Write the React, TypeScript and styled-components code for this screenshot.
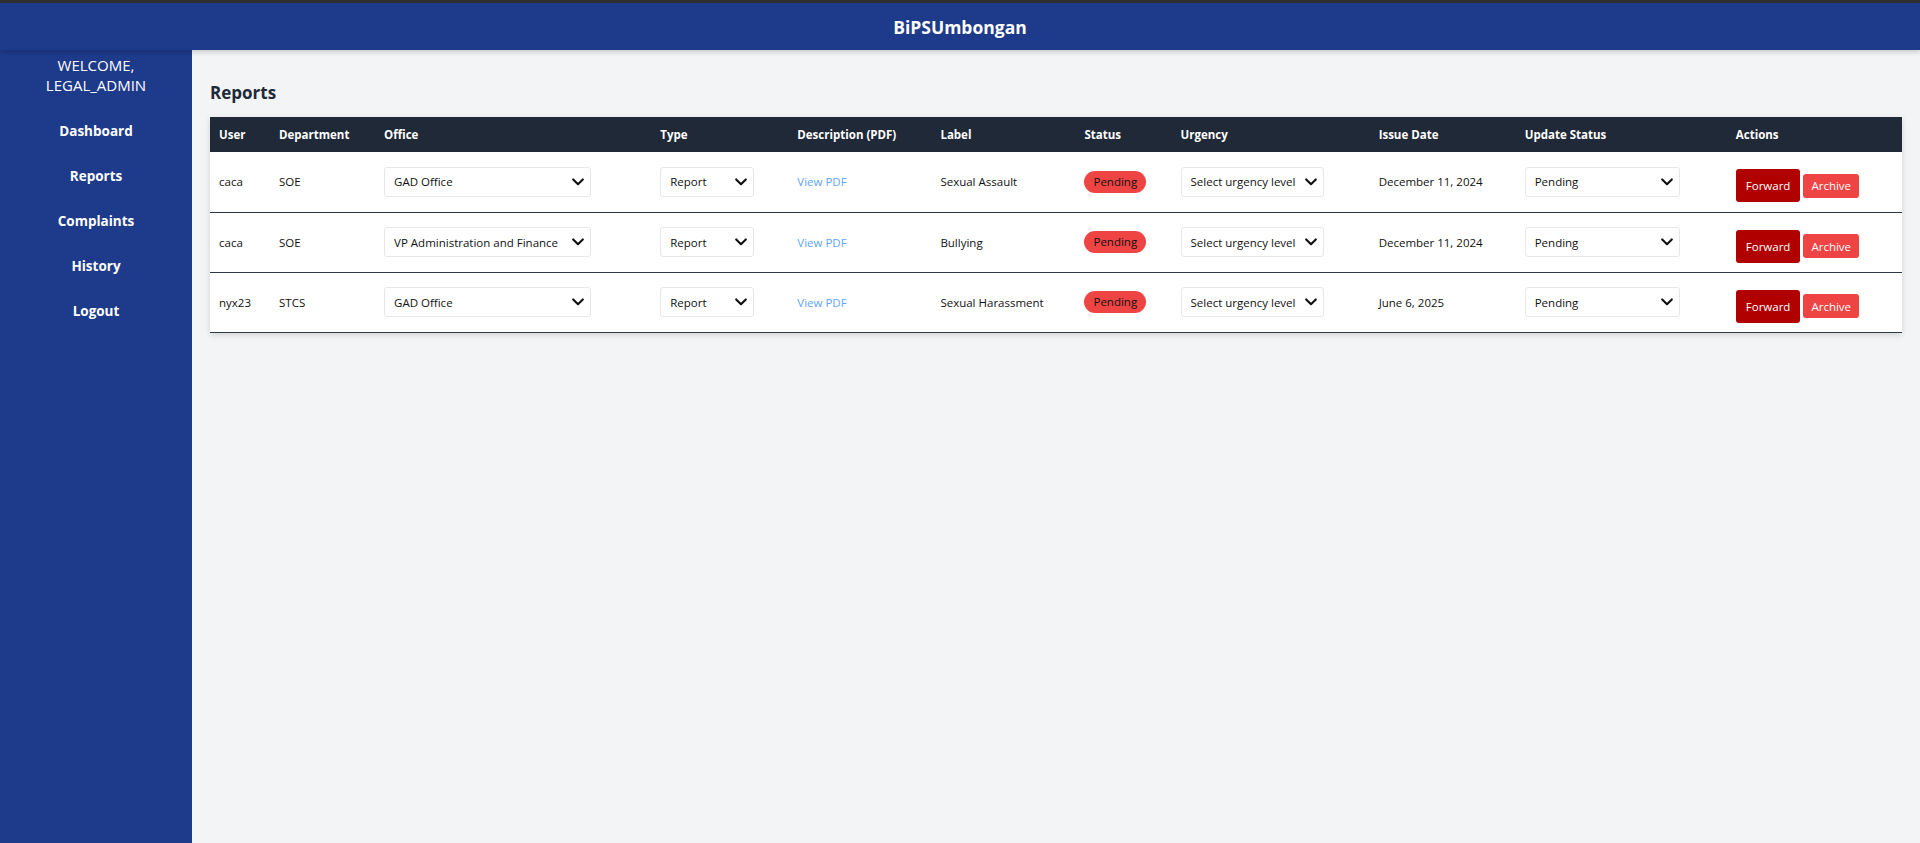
import * as React from 'react';
import styled, { createGlobalStyle } from 'styled-components';

const GlobalStyle = createGlobalStyle`
  html, body {
    margin: 0;
    padding: 0;
  }
  body {
    font-family: 'Open Sans', 'Noto Sans', Arial, sans-serif;
    background: #f3f4f6;
    color: #111827;
  }
  * {
    box-sizing: border-box;
  }
`;

const offices = [
  'GAD Office',
  'VP Administration and Finance',
  'Legal Office',
  'Guidance Office',
];
const urgencyLevels = ['Select urgency level', 'Low', 'Medium', 'High'];
const statusOptions = ['Pending', 'In Progress', 'Resolved'];

const reports = [
  {
    user: 'caca',
    department: 'SOE',
    office: 'GAD Office',
    label: 'Sexual Assault',
    issued: 'December 11, 2024',
  },
  {
    user: 'caca',
    department: 'SOE',
    office: 'VP Administration and Finance',
    label: 'Bullying',
    issued: 'December 11, 2024',
  },
  {
    user: 'nyx23',
    department: 'STCS',
    office: 'GAD Office',
    label: 'Sexual Harassment',
    issued: 'June 6, 2025',
  },
];

const columns = [
  { title: 'User', width: 60 },
  { title: 'Department', width: 105 },
  { title: 'Office', width: 276 },
  { title: 'Type', width: 137 },
  { title: 'Description (PDF)', width: 143 },
  { title: 'Label', width: 144 },
  { title: 'Status', width: 96 },
  { title: 'Urgency', width: 198 },
  { title: 'Issue Date', width: 146 },
  { title: 'Update Status', width: 211 },
  { title: 'Actions', width: 175 },
];

function Chevron() {
  return (
    <svg width="12" height="8" viewBox="0 0 12 8" fill="none">
      <path
        d="M1.2 1.4 L6 6.2 L10.8 1.4"
        stroke="#111"
        strokeWidth="2.1"
        strokeLinecap="round"
        strokeLinejoin="round"
      />
    </svg>
  );
}

function Dropdown({
  width,
  options,
  value,
}: {
  width: number;
  options: string[];
  value: string;
}) {
  return (
    <SelectWrap $width={width}>
      <Select defaultValue={value}>
        {options.map((o) => (
          <option key={o} value={o}>
            {o}
          </option>
        ))}
      </Select>
      <Arrow>
        <Chevron />
      </Arrow>
    </SelectWrap>
  );
}

export default function App() {
  return (
    <Page>
      <GlobalStyle />
      <TopBar>BiPSUmbongan</TopBar>
      <Body>
        <Sidebar>
          <Welcome>
            WELCOME,
            <br />
            LEGAL_ADMIN
          </Welcome>
          <Nav>
            <NavLink>Dashboard</NavLink>
            <NavLink>Reports</NavLink>
            <NavLink>Complaints</NavLink>
            <NavLink>History</NavLink>
            <NavLink>Logout</NavLink>
          </Nav>
        </Sidebar>
        <Main>
          <Title>Reports</Title>
          <Table>
            <colgroup>
              {columns.map((c) => (
                <col key={c.title} style={{ width: c.width }} />
              ))}
            </colgroup>
            <thead>
              <tr>
                {columns.map((c) => (
                  <Th key={c.title}>{c.title}</Th>
                ))}
              </tr>
            </thead>
            <tbody>
              {reports.map((r, i) => (
                <Row key={i}>
                  <Td>{r.user}</Td>
                  <Td>{r.department}</Td>
                  <Td>
                    <Dropdown width={207} options={offices} value={r.office} />
                  </Td>
                  <Td>
                    <Dropdown width={94} options={['Report', 'Complaint']} value="Report" />
                  </Td>
                  <Td>
                    <PdfLink>View PDF</PdfLink>
                  </Td>
                  <Td>{r.label}</Td>
                  <Td>
                    <Pill>Pending</Pill>
                  </Td>
                  <Td>
                    <Dropdown
                      width={143}
                      options={urgencyLevels}
                      value="Select urgency level"
                    />
                  </Td>
                  <Td>{r.issued}</Td>
                  <Td>
                    <Dropdown width={155} options={statusOptions} value="Pending" />
                  </Td>
                  <Td>
                    <Actions>
                      <ForwardButton>Forward</ForwardButton>
                      <ArchiveButton>Archive</ArchiveButton>
                    </Actions>
                  </Td>
                </Row>
              ))}
            </tbody>
          </Table>
        </Main>
      </Body>
    </Page>
  );
}

const Page = styled.div`
  min-height: 100vh;
  display: flex;
  flex-direction: column;
`;

const TopBar = styled.header`
  position: relative;
  z-index: 2;
  height: 50px;
  border-top: 3px solid #2e2f33;
  background: #1e3a8a;
  color: #fff;
  font-size: 17.5px;
  font-weight: 700;
  display: flex;
  align-items: center;
  justify-content: center;
  box-shadow: 0 2px 5px rgba(0, 0, 0, 0.18);
`;

const Body = styled.div`
  flex: 1;
  display: flex;
`;

const Sidebar = styled.aside`
  width: 192px;
  flex-shrink: 0;
  background: #1e3a8a;
  color: #fff;
  text-align: center;
  padding-top: 5px;
`;

const Welcome = styled.div`
  font-size: 15px;
  line-height: 20px;
`;

const Nav = styled.nav`
  margin-top: 13px;
  display: flex;
  flex-direction: column;
`;

const NavLink = styled.a`
  display: block;
  padding: 12.5px 0;
  line-height: 20px;
  font-size: 13.5px;
  font-weight: 700;
  color: #fff;
  cursor: pointer;
`;

const Main = styled.main`
  flex: 1;
  padding: 29px 18px;
`;

const Title = styled.h2`
  margin: 0 0 10px;
  font-size: 17px;
  line-height: 28px;
  font-weight: 700;
  color: #1f2937;
`;

const Table = styled.table`
  width: 100%;
  table-layout: fixed;
  border-collapse: collapse;
  background: #fff;
  box-shadow: 0 2px 6px rgba(0, 0, 0, 0.14);
  font-size: 11.5px;
`;

const Th = styled.th`
  height: 35px;
  padding: 0 9px;
  background: #1f2937;
  color: #fff;
  font-weight: 700;
  text-align: left;
  white-space: nowrap;
`;

const Row = styled.tr`
  border-bottom: 1px solid #2f3846;
`;

const Td = styled.td`
  height: 60px;
  padding: 0 9px;
  vertical-align: middle;
  color: #111;
  white-space: nowrap;
`;

const SelectWrap = styled.div<{ $width: number }>`
  position: relative;
  width: ${(p) => p.$width}px;
`;

const Select = styled.select`
  appearance: none;
  width: 100%;
  height: 30px;
  padding: 0 26px 0 9px;
  border: 1px solid #e5e7eb;
  border-radius: 3px;
  background: #fff;
  font-family: inherit;
  font-size: 11.5px;
  color: #111;
`;

const Arrow = styled.span`
  position: absolute;
  right: 7px;
  top: 50%;
  transform: translateY(-50%);
  display: flex;
  pointer-events: none;
`;

const PdfLink = styled.a`
  color: #60a5fa;
  cursor: pointer;
`;

const Pill = styled.span`
  display: inline-block;
  padding: 2px 9px;
  line-height: 18px;
  border-radius: 9999px;
  background: #ef4444;
  color: #111;
`;

const Actions = styled.div`
  display: flex;
  align-items: center;
  gap: 3px;
  padding-top: 8px;
`;

const ForwardButton = styled.button`
  height: 33px;
  padding: 0 10px;
  border: none;
  border-radius: 3px;
  background: #b00000;
  color: #fff;
  font-family: inherit;
  font-size: 11.5px;
`;

const ArchiveButton = styled.button`
  height: 24px;
  padding: 0 8px;
  border: none;
  border-radius: 3px;
  background: #ef4444;
  color: #fff;
  font-family: inherit;
  font-size: 11.5px;
`;
